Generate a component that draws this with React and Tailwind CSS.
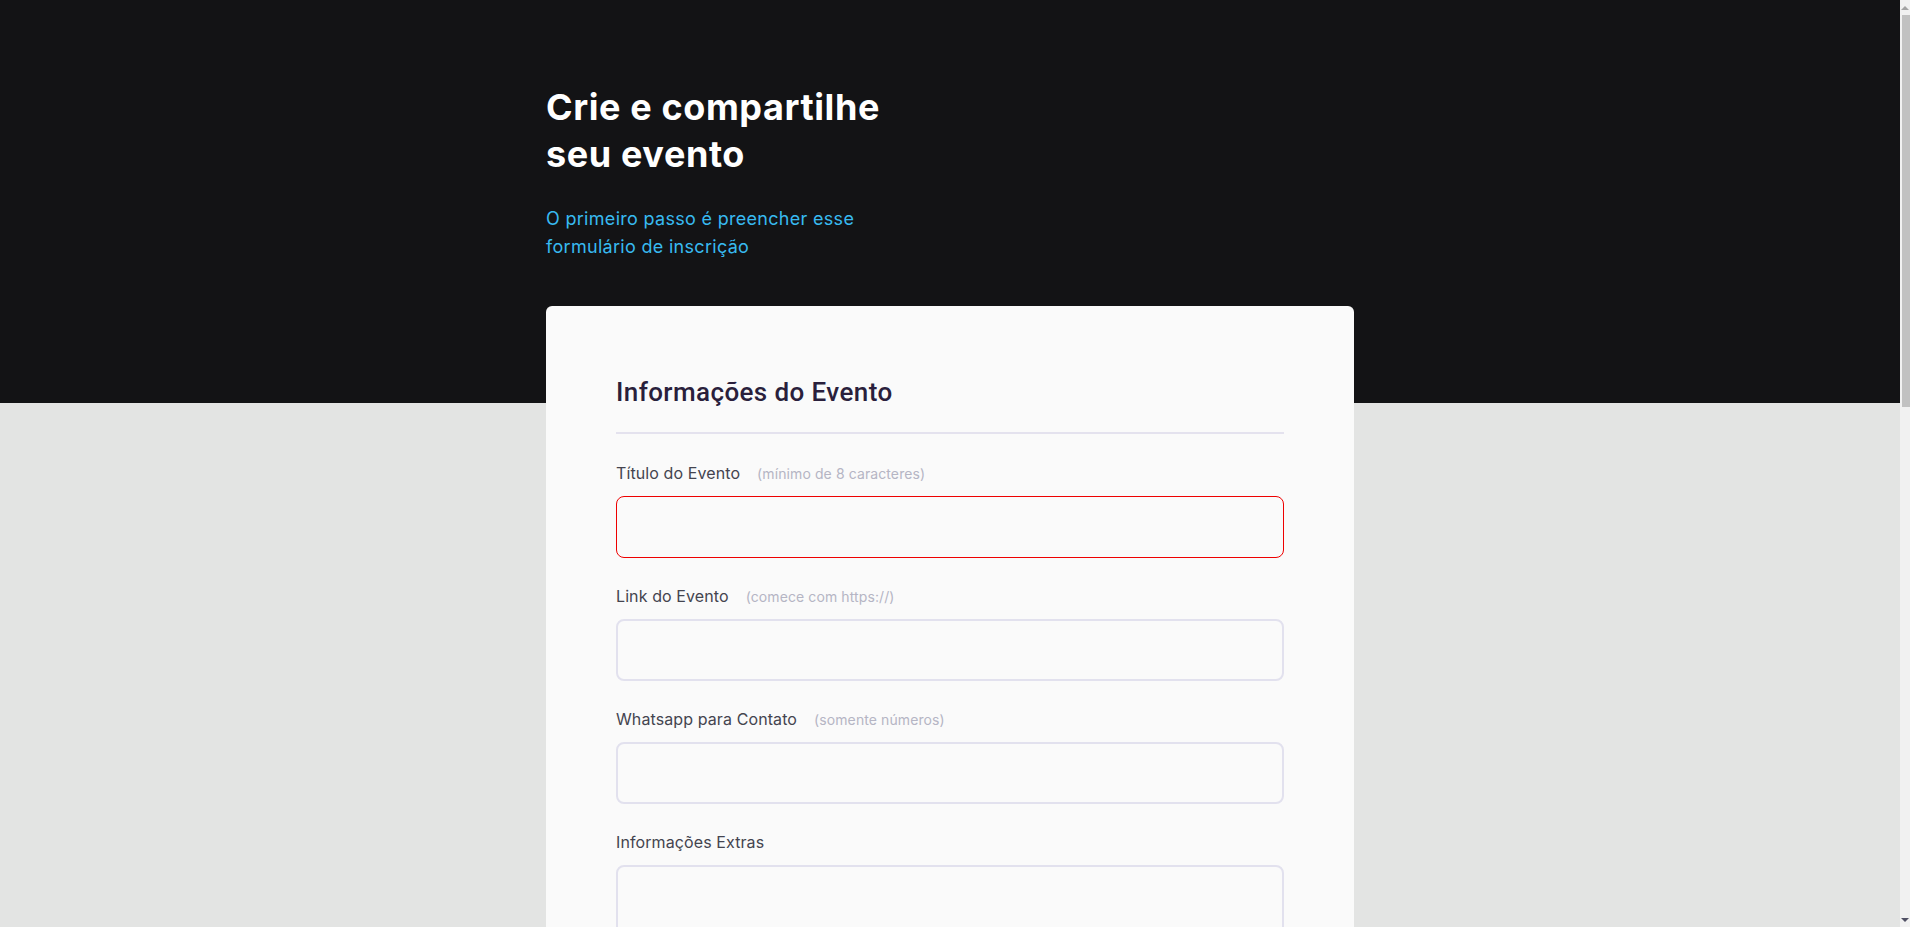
import React from 'react';

const eventFields = [
  { name: 'title', label: 'Título do Evento', hint: '(mínimo de 8 caracteres)', error: true },
  { name: 'link', label: 'Link do Evento', hint: '(comece com https://)' },
  { name: 'whatsapp', label: 'Whatsapp para Contato', hint: '(somente números)' },
  { name: 'extra', label: 'Informações Extras', textarea: true },
];

const addressFields = [
  { name: 'cep', label: 'CEP', hint: '(somente números)' },
  { name: 'city', label: 'Cidade' },
  { name: 'street', label: 'Endereço' },
  { name: 'number', label: 'Número' },
];

function Field({ f }) {
  const border = f.error ? 'border border-[#ee0000]' : 'border-2 border-[#e2e1ee]';
  return (
    <div className="flex flex-col">
      <label htmlFor={f.name} className="flex items-baseline h-[24px] leading-[24px]">
        <span className="text-[16px] tracking-[0.1px] text-[#44444f]">{f.label}</span>
        {f.hint && <span className="ml-[17px] text-[14px] tracking-[0.1px] text-[#b5b5c4]">{f.hint}</span>}
      </label>
      {f.textarea ? (
        <textarea id={f.name} className={`mt-[11px] h-[150px] w-full rounded-lg bg-[#fafafa] outline-none resize-none ${border}`} />
      ) : (
        <input id={f.name} className={`mt-[11px] h-[62px] w-full rounded-lg bg-[#fafafa] outline-none ${border}`} />
      )}
    </div>
  );
}

function Section({ title, fields, className = '' }) {
  return (
    <section className={className}>
      <h2 className="font-['Roboto',sans-serif] font-medium text-[26px] tracking-[0.4px] leading-[32px] text-[#2a1f3c]">{title}</h2>
      <div className="mt-[24px] h-[2px] bg-[#e4e2ee]" />
      <div className="mt-[27px] flex flex-col gap-[26px]">
        {fields.map(f => <Field key={f.name} f={f} />)}
      </div>
    </section>
  );
}

function Scrollbar() {
  return (
    <div className="flex w-[10px] shrink-0 flex-col bg-[#f1f1f1]">
      <div className="flex h-[15px] items-center justify-end pr-[1px]">
        <div className="h-0 w-0 border-x-[4px] border-b-[4px] border-x-transparent border-b-[#a3a3a3]" />
      </div>
      <div className="ml-[2px] h-[392px] bg-[#c1c1c1]" />
      <div className="flex-1" />
      <div className="flex h-[15px] items-center justify-end pr-[1px]">
        <div className="h-0 w-0 border-x-[4px] border-t-[4px] border-x-transparent border-t-[#505064]" />
      </div>
    </div>
  );
}

export default function App() {
  return (
    <div className="flex h-screen font-['Inter',sans-serif]">
      <div className="flex-1 overflow-y-auto bg-[#e3e4e3] [scrollbar-width:none]">
        <header className="h-[403px] bg-[#131315] pt-[84px]">
          <div className="mx-auto w-[808px]">
            <h1 className="text-[36px] leading-[47px] font-bold text-white tracking-[0.6px]">
              Crie e compartilhe<br />seu evento
            </h1>
            <p className="mt-[27px] text-[18px] leading-[28px] tracking-[0.3px] text-[#38baf0]">
              O primeiro passo é preencher esse<br />formulário de inscrição
            </p>
          </div>
        </header>
        <main className="-mt-[97px] pb-[260px]">
          <form className="mx-auto w-[808px] rounded-md bg-[#fafafa] p-[70px]">
            <Section title="Informações do Evento" fields={eventFields} />
            <Section title="Endereço do Evento" fields={addressFields} className="mt-[70px]" />
            <button type="button" className="mt-[40px] h-[60px] w-full rounded-lg bg-[#131315] text-[16px] font-semibold text-white">
              Enviar inscrição
            </button>
          </form>
        </main>
      </div>
      <Scrollbar />
    </div>
  );
}
